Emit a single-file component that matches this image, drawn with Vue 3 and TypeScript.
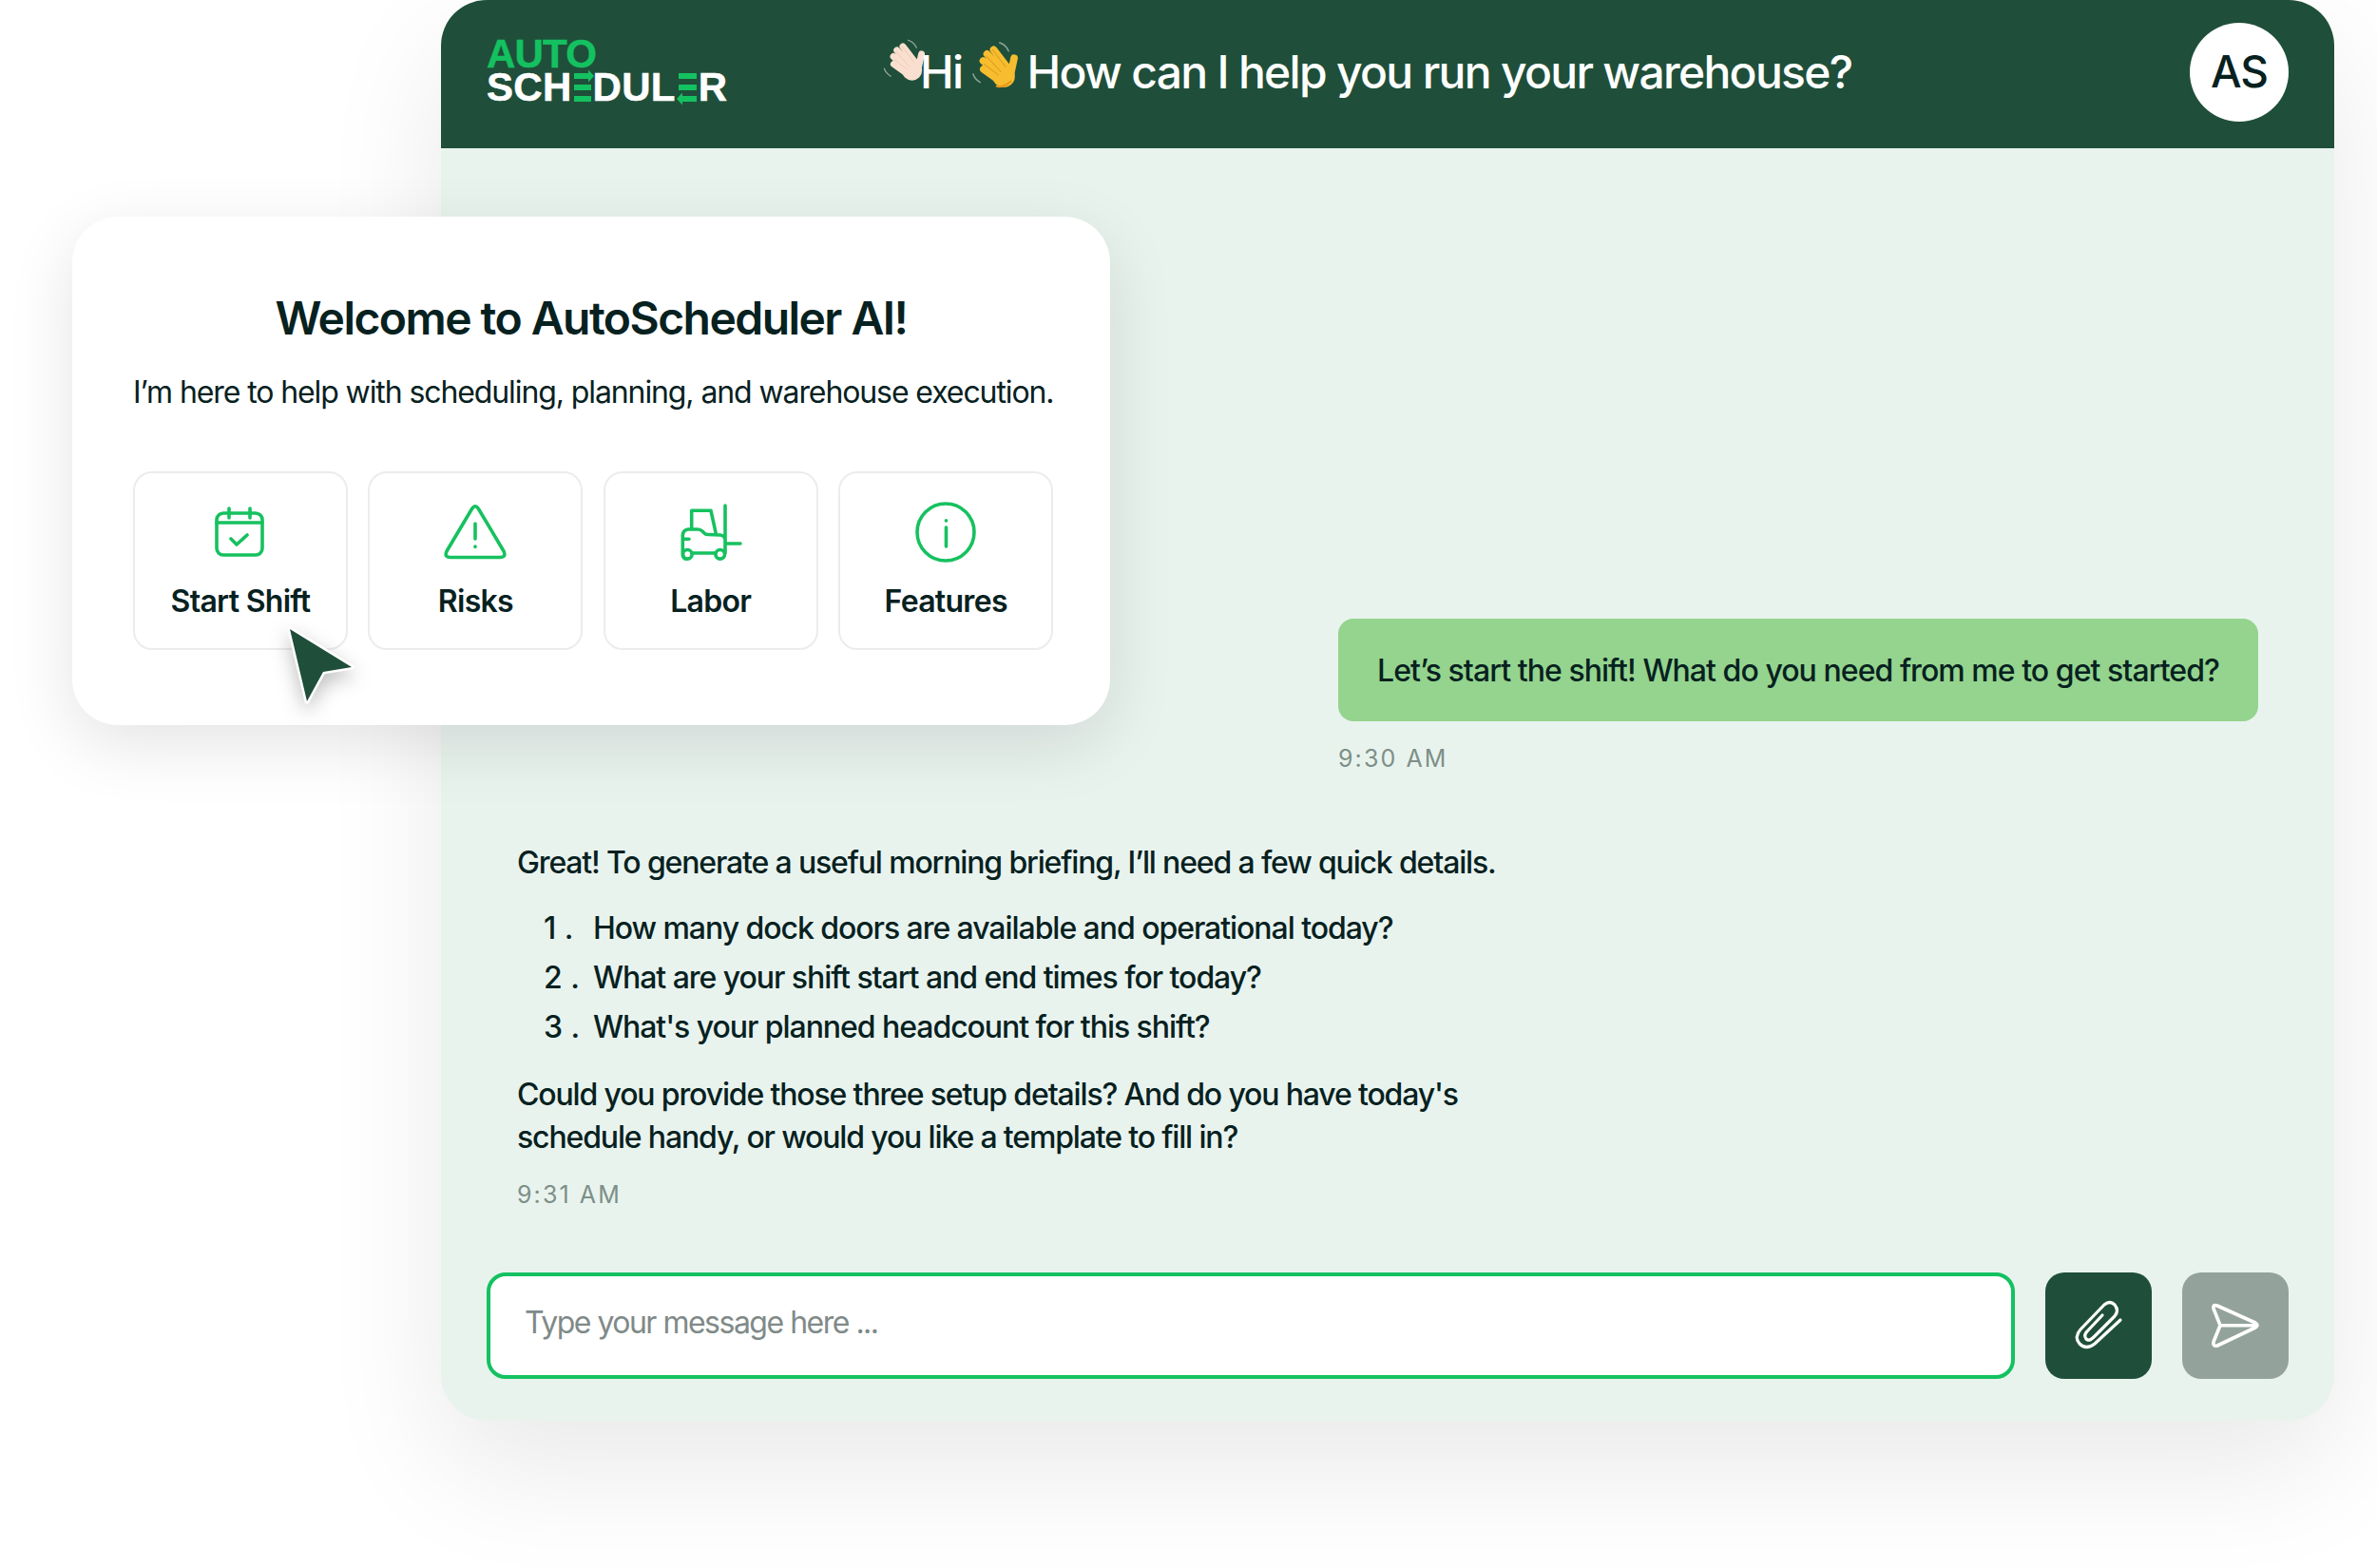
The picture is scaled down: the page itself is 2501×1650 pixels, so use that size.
<script setup lang="ts">
interface Tile { label: string; icon: string }
const tiles: Tile[] = [
  { label: 'Start Shift', icon: 'calendar' },
  { label: 'Risks', icon: 'risk' },
  { label: 'Labor', icon: 'forklift' },
  { label: 'Features', icon: 'info' },
]
const questions: string[] = [
  'How many dock doors are available and operational today?',
  'What are your shift start and end times for today?',
  "What's your planned headcount for this shift?",
]
</script>

<template>
  <div class="canvas">
    <main class="chat">
      <header class="topbar">
        <div class="logo">
          <div class="logo-auto">AUTO</div>
          <div class="logo-sched">
            <span>SCH</span>
            <svg class="logo-e" viewBox="0 0 22 30" width="22" height="30" fill="#14c160"><path d="M2 0h16v6H2zM2 12h18v6H2zM2 24h18v6H2z"/><path d="M17 -3.500l6 6.500-6 6.500z"/></svg>
            <span>DUL</span>
            <svg class="logo-e" viewBox="0 0 24 30" width="24" height="30" fill="#14c160"><path d="M3 0h19v6H3zM3 12h19v6H3zM6 24h16v6H6z"/><path d="M7 20.500l-6 6.500 6 6.500z"/></svg>
            <span>R</span>
          </div>
        </div>
        <h1 class="greeting">
          <svg class="wave light" viewBox="0 0 150 175" width="50" height="58" fill="none" stroke-linecap="round">
            <path d="M92 22q18 5 26 24M16 112q4 14 20 24" stroke="#8fa69a" stroke-width="4"/>
            <g stroke="#f9dfcf" stroke-width="21">
              <path d="M75 42l40 52M56 54l48 54M45 74l50 42M46 98l42 30M134 66l-10 46"/>
            </g>
            <circle cx="104" cy="118" r="32" fill="#f9dfcf"/>
            <path d="M72 42l38 50M54 60l42 46M48 84l40 30" stroke="#efc8b1" stroke-width="2.500"/>
          </svg>
          <span class="hi">Hi</span>
          <svg class="wave gold" viewBox="0 0 150 175" width="55" height="64" fill="none" stroke-linecap="round">
            <path d="M92 22q18 5 26 24M16 112q4 14 20 24" stroke="#8fa69a" stroke-width="4"/>
            <g stroke="#f7bd2e" stroke-width="21">
              <path d="M75 42l40 52M56 54l48 54M45 74l50 42M46 98l42 30M134 66l-10 46"/>
            </g>
            <circle cx="104" cy="118" r="32" fill="#f7bd2e"/>
            <path d="M72 42l38 50M54 60l42 46M48 84l40 30" stroke="#d9901a" stroke-width="2.500"/>
            <path d="M84 147q22 4 40-14" stroke="#ea9a1c" stroke-width="6"/>
          </svg>
          <span>How can I help you run your warehouse?</span>
        </h1>
        <div class="avatar">AS</div>
      </header>

      <section class="thread">
        <div class="outgoing">
          <div class="bubble">Let’s start the shift! What do you need from me to get started?</div>
          <time class="stamp">9:30 AM</time>
        </div>
        <div class="incoming">
          <p class="lead">Great! To generate a useful morning briefing, I’ll need a few quick details.</p>
          <ol class="questions">
            <li v-for="(q, i) in questions" :key="i"><span class="num">{{ i + 1 }} .</span><span>{{ q }}</span></li>
          </ol>
          <p class="follow">Could you provide those three setup details? And do you have today's schedule handy, or would you like a template to fill in?</p>
          <time class="stamp">9:31 AM</time>
        </div>
      </section>

      <footer class="composer">
        <div class="input">Type your message here ...</div>
        <button class="action attach" aria-label="Attach">
          <svg viewBox="0 0 112 112" width="112" height="112" fill="none" stroke="#fff" stroke-width="3.200" stroke-linecap="round" stroke-linejoin="round">
            <path d="M79 50 52 75Q43 82 36 75 30 68 37 60L62 34Q68 29 73 34 78 40 73 46L51 68Q46 73 43 70 40 66 44 62L60 45"/>
          </svg>
        </button>
        <button class="action send" aria-label="Send">
          <svg viewBox="0 0 112 112" width="112" height="112" fill="none" stroke="#fff" stroke-width="3.600" stroke-linecap="round" stroke-linejoin="round">
            <path d="M33 38Q32 33 37 35L77 53Q81 55.700 77 58L37 77Q32 78 33 73L40 55.700ZM40 55.700H79"/>
          </svg>
        </button>
      </footer>
    </main>

    <aside class="welcome">
      <h2>Welcome to AutoScheduler AI!</h2>
      <p>I’m here to help with scheduling, planning, and warehouse execution.</p>
      <div class="tiles">
        <button v-for="t in tiles" :key="t.label" class="tile">
          <svg class="tile-icon" viewBox="0 0 68 64" width="68" height="64" fill="none" stroke="#16c15f" stroke-width="3.600" stroke-linecap="round" stroke-linejoin="round">
            <template v-if="t.icon === 'calendar'">
              <rect x="9" y="12" width="48" height="44" rx="7" /><path d="M9 22h48M22 7v10M44 7v10M24 39l6 6 11-10" />
            </template>
            <template v-else-if="t.icon === 'risk'">
              <path d="M30.500 7.500Q34 2 37.500 7.500L64 52Q67 58.500 60 58.500H8Q1 58.500 4 52ZM34 23v16M34 47v.5" />
            </template>
            <template v-else-if="t.icon === 'forklift'">
              <path d="M13.700 29V9.300H34L39.300 33.700M49 4V54M49 44H65M4.300 35Q5 29.500 10 29H20Q23 29 25 31L27 33Q28 34.500 31 34.500L44 35Q48 35.500 49 39M4.300 35V54Q4.300 59 7 60M14 54H39M4.300 39.300H11"/>
              <circle cx="9.300" cy="55.300" r="4.800"/><circle cx="43.700" cy="55.300" r="4.800"/>
            </template>
            <template v-else>
              <circle cx="34" cy="32" r="30" /><path d="M34.500 27v20M34.500 19.700v.3" />
            </template>
          </svg>
          <span>{{ t.label }}</span>
        </button>
      </div>
      <svg class="cursor" viewBox="0 0 80 90" width="80" height="90">
        <path d="M5 4 70 44 40 49 23 80Z" fill="#1f4f3a" stroke="#fff" stroke-width="5" stroke-linejoin="round" paint-order="stroke"/>
      </svg>
    </aside>
  </div>
</template>

<style scoped>
.canvas {
  position: relative;
  width: 2501px;
  height: 1650px;
  overflow: hidden;
  background: #fff;
  font-family: Inter, "Liberation Sans", sans-serif;
  color: #07211f;
}
.chat {
  display: flex;
  flex-direction: column;
  width: 1992px;
  height: 1495px;
  margin-left: 464px;
  border-radius: 48px;
  background: #e9f3ee;
  box-shadow: 0 50px 130px rgba(0, 0, 0, 0.09);
  overflow: hidden;
}
.topbar {
  display: flex;
  align-items: center;
  box-sizing: border-box;
  height: 156px;
  padding: 0 48px 4px;
  background: #1f4f3a;
  flex: none;
}
.logo {
  width: 410px;
  flex: none;
  margin-top: -4px;
  font-family: "Liberation Sans", Arial, sans-serif;
  font-weight: 700;
  font-size: 42px;
  line-height: 35px;
  color: #fff;
  -webkit-text-stroke: 0.5px currentColor;
}
.logo-auto { color: #14c160; letter-spacing: -0.8px; }
.logo-sched { display: flex; align-items: center; letter-spacing: 0.3px; }
.logo-e { overflow: visible; flex: none; }
.greeting {
  display: flex;
  align-items: center;
  margin: 0 0 2px;
  flex: 1;
  font-size: 48px;
  font-weight: 500;
  color: #fff;
  letter-spacing: -1.7px;
}
.wave { flex: none; }
.wave.light { margin: 0 -7px 22px 3px; }
.wave.gold { margin: 0 7px 12px 6px; }
.avatar {
  display: flex;
  align-items: center;
  justify-content: center;
  width: 104px;
  height: 104px;
  flex: none;
  box-sizing: border-box;
  padding-bottom: 2px;
  border-radius: 50%;
  background: #fff;
  color: #07211f;
  font-size: 46px;
  font-weight: 500;
  letter-spacing: -1px;
}
.thread {
  flex: 1;
  display: flex;
  flex-direction: column;
  padding: 495px 80px 0;
  font-size: 32px;
  letter-spacing: -1.150px;
  font-weight: 450;
}
.outgoing {
  align-self: flex-end;
  width: 968px;
}
.bubble {
  display: flex;
  align-items: center;
  justify-content: center;
  height: 108px;
  border-radius: 16px;
  background: #94d48e;
  letter-spacing: -0.950px;
}
.stamp {
  display: block;
  margin-top: 24px;
  font-size: 25px;
  font-weight: 400;
  line-height: 30px;
  letter-spacing: 2.100px;
  color: #7d8f88;
}
.incoming { margin-top: 72px; width: 1060px; }
.lead, .follow { margin: 0; line-height: 45px; }
.questions { list-style: none; margin: 20px 0 0; padding: 0; letter-spacing: -1.050px; }
.questions li { display: flex; height: 52px; align-items: center; padding-left: 28px; }
.num { width: 52px; flex: none; letter-spacing: 0; }
.follow { margin-top: 23px; }
.incoming .stamp { margin-top: 23px; }
.composer {
  display: flex;
  align-items: center;
  gap: 32px;
  padding: 0 48px 44px;
  flex: none;
}
.input {
  display: flex;
  align-items: center;
  flex: 1;
  height: 112px;
  box-sizing: border-box;
  padding: 0 0 8px 36px;
  border: 4px solid #14c160;
  border-radius: 20px;
  background: #fff;
  color: #7f8a89;
  font-size: 32px;
  letter-spacing: -1.500px;
}
.action {
  display: flex;
  align-items: center;
  justify-content: center;
  width: 112px;
  height: 112px;
  padding: 0;
  border: 0;
  border-radius: 20px;
}
.attach { background: #1f4f3a; }
.send { background: #93a39b; }
.welcome {
  position: absolute;
  left: 76px;
  top: 228px;
  width: 1092px;
  height: 535px;
  box-sizing: border-box;
  padding: 77px 64px 0;
  border-radius: 48px;
  background: #fff;
  box-shadow: 0 20px 70px rgba(0, 0, 0, 0.11);
  text-align: center;
}
.welcome h2 {
  margin: 0;
  font-size: 48px;
  line-height: 60px;
  font-weight: 600;
  letter-spacing: -1.550px;
}
.welcome p {
  margin: 26px 0 0;
  font-size: 32px;
  line-height: 44px;
  letter-spacing: -1.100px;
  white-space: nowrap;
}
.tiles {
  display: grid;
  grid-template-columns: repeat(4, 226px);
  gap: 21.400px;
  margin-top: 60.500px;
}
.tile {
  display: flex;
  flex-direction: column;
  align-items: center;
  height: 188px;
  padding: 30.500px 0 0;
  border: 2px solid #ececec;
  border-radius: 20px;
  background: #fff;
  color: #07211f;
  font-family: inherit;
  font-size: 32px;
  font-weight: 600;
  letter-spacing: -0.700px;
}
.tile-icon { margin-bottom: 21px; flex: none; overflow: visible; }
.cursor {
  position: absolute;
  left: 224px;
  top: 430px;
  overflow: visible;
  filter: drop-shadow(0 8px 10px rgba(0, 0, 0, 0.25));
}
</style>
